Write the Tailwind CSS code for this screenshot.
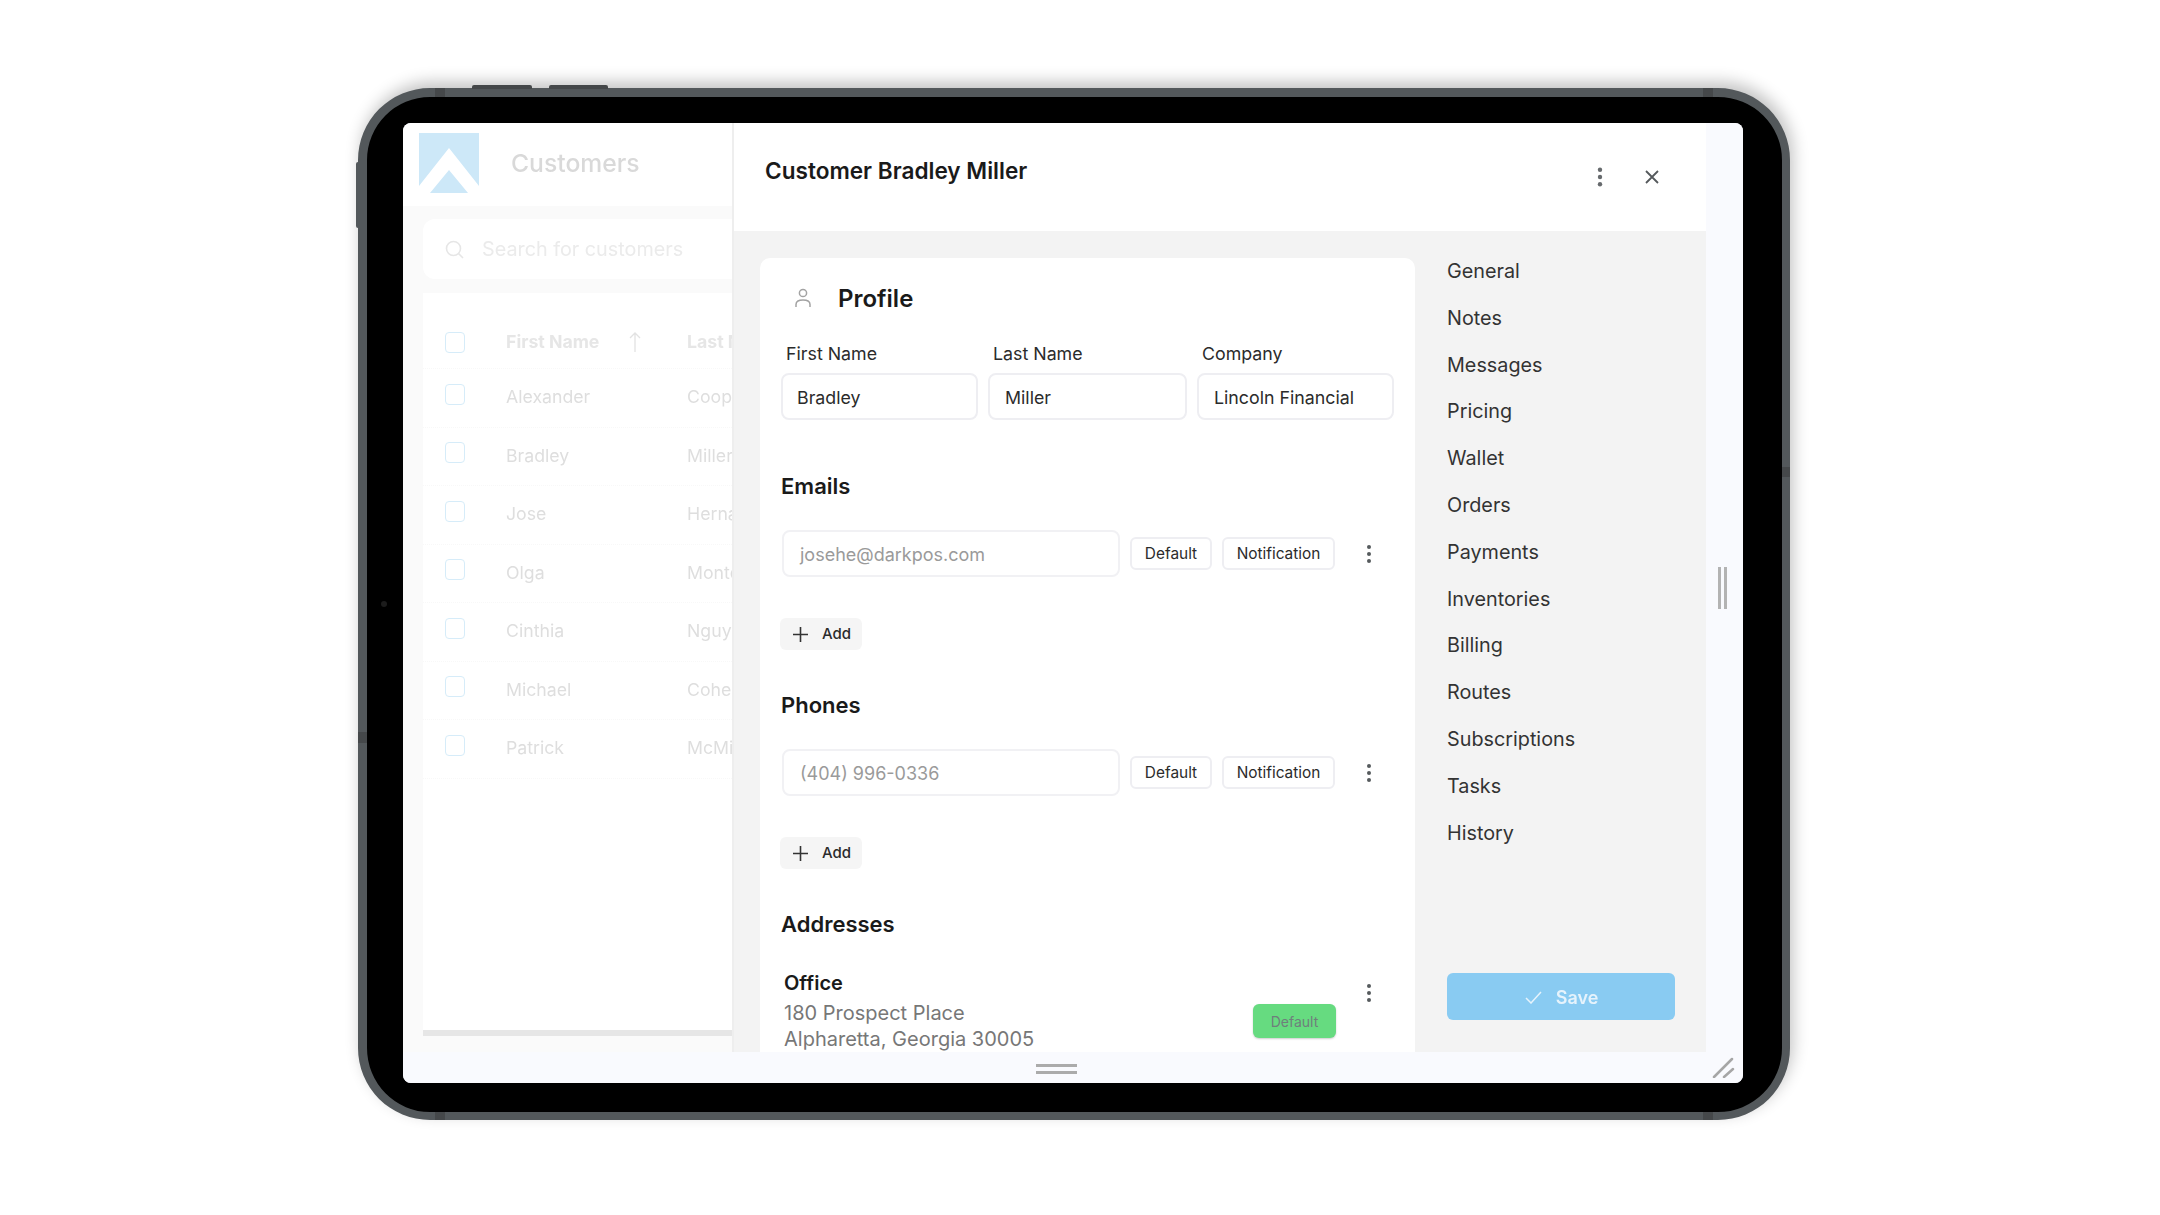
<!DOCTYPE html>
<html lang="en">
<head>
<meta charset="utf-8">
<title>Customer Bradley Miller</title>
<script src="https://cdn.jsdelivr.net/npm/@tailwindcss/browser@4"></script>
</head>
<body class="w-[2160px] h-[1215px] overflow-hidden bg-white pl-[358px] pt-[88px] font-['Inter',sans-serif]">
<div class="relative w-[1432px] h-[1032px]">
  <!-- hardware buttons -->
  <div class="absolute left-[114px] top-[-3px] w-[60px] h-[4px] rounded-t-[2px] bg-[#45484a]"></div>
  <div class="absolute left-[191px] top-[-3px] w-[59px] h-[4px] rounded-t-[2px] bg-[#45484a]"></div>
  <div class="absolute left-[-2px] top-[74px] w-[3px] h-[66px] rounded-l-[2px] bg-[#53585b]"></div>

  <div class="w-[1432px] h-[1032px] rounded-[72px] bg-black border-t-[9px] border-l-[9px] border-r-[8px] border-b-[8px] border-[#53585b] shadow-[3px_-6px_16px_rgba(0,0,0,0.24)] pt-[26px] pl-[36px] pr-[39px] pb-[29px]">
    <!-- screen -->
    <div class="relative w-[1340px] h-[960px] rounded-[8px] overflow-hidden bg-[#f9fafe] flex flex-col blur-[0.5px]">
      <div class="flex h-[929px]">
        <!-- left list panel -->
        <div class="w-[331px] shrink-0 flex flex-col border-r-[2px] border-[#eeeeee] overflow-hidden">
          <div class="h-[83px] shrink-0 bg-white pl-[16px] pt-[10px] flex items-start">
            <svg class="w-[60px] h-[60px] shrink-0" viewBox="0 0 60 60"><rect width="60" height="60" fill="#cde8f8"/><polygon points="30,15 60,53 60,60 49,60 30,37 11,60 0,60 0,53" fill="#ffffff"/></svg>
            <div class="ml-[32px] h-[62px] flex items-center text-[24.7px] font-medium text-[#d9d9d9]">Customers</div>
          </div>
          <div class="flex-1 min-h-0 bg-[#fafafa] pl-[20px] pt-[13px] pb-[16px] flex flex-col">
            <div class="h-[60px] shrink-0 bg-white rounded-l-[12px] pl-[22px] flex items-center text-[19.8px] text-[#ebebeb] whitespace-nowrap overflow-hidden">
              <svg class="w-[19px] h-[19px] shrink-0" viewBox="0 0 19 19" fill="none" stroke="#e6e6e6" stroke-width="1.6"><circle cx="8.5" cy="8.5" r="7"/><path d="M13.5 13.5 18 18"/></svg>
              <span class="ml-[18px] pt-[2px]">Search for customers</span>
            </div>
            <div class="mt-[14px] flex-1 min-h-0 bg-white border-b-[6px] border-[#e6e6e6] pt-[24px] overflow-hidden text-[17.7px] text-[#dedede] whitespace-nowrap">
              <div class="h-[52px] flex items-center pl-[22px] border-b border-dotted border-[#f8f8f8]">
                <span class="w-[20px] h-[21px] shrink-0 rounded-[4px] border border-[#d6ecf9]"></span>
                <div class="ml-[41px] w-[181px] shrink-0 flex items-center font-bold text-[#e6e6e6]">
                  <span>First Name</span>
                  <svg class="ml-[29px] w-[14px] h-[22px]" viewBox="0 0 14 22" fill="none" stroke="#e2e2e2" stroke-width="1.3"><path d="M7 21V2M2 7l5-5 5 5"/></svg>
                </div>
                <span class="font-bold text-[#e6e6e6]">Last Name</span>
              </div>
              <div class="h-[58.5px] flex items-center pl-[22px] border-b border-dotted border-[#f8f8f8]">
                <span class="mb-[7px] w-[20px] h-[21px] shrink-0 rounded-[4px] border border-[#d6ecf9]"></span><span class="ml-[41px] w-[181px] shrink-0">Alexander</span><span>Cooper</span>
              </div>
              <div class="h-[58.5px] flex items-center pl-[22px] border-b border-dotted border-[#f8f8f8]">
                <span class="mb-[7px] w-[20px] h-[21px] shrink-0 rounded-[4px] border border-[#d6ecf9]"></span><span class="ml-[41px] w-[181px] shrink-0">Bradley</span><span>Miller</span>
              </div>
              <div class="h-[58.5px] flex items-center pl-[22px] border-b border-dotted border-[#f8f8f8]">
                <span class="mb-[7px] w-[20px] h-[21px] shrink-0 rounded-[4px] border border-[#d6ecf9]"></span><span class="ml-[41px] w-[181px] shrink-0">Jose</span><span>Hernandez</span>
              </div>
              <div class="h-[58.5px] flex items-center pl-[22px] border-b border-dotted border-[#f8f8f8]">
                <span class="mb-[7px] w-[20px] h-[21px] shrink-0 rounded-[4px] border border-[#d6ecf9]"></span><span class="ml-[41px] w-[181px] shrink-0">Olga</span><span>Montero</span>
              </div>
              <div class="h-[58.5px] flex items-center pl-[22px] border-b border-dotted border-[#f8f8f8]">
                <span class="mb-[7px] w-[20px] h-[21px] shrink-0 rounded-[4px] border border-[#d6ecf9]"></span><span class="ml-[41px] w-[181px] shrink-0">Cinthia</span><span>Nguyen</span>
              </div>
              <div class="h-[58.5px] flex items-center pl-[22px] border-b border-dotted border-[#f8f8f8]">
                <span class="mb-[7px] w-[20px] h-[21px] shrink-0 rounded-[4px] border border-[#d6ecf9]"></span><span class="ml-[41px] w-[181px] shrink-0">Michael</span><span>Cohen</span>
              </div>
              <div class="h-[58.5px] flex items-center pl-[22px] border-b border-dotted border-[#f8f8f8]">
                <span class="mb-[7px] w-[20px] h-[21px] shrink-0 rounded-[4px] border border-[#d6ecf9]"></span><span class="ml-[41px] w-[181px] shrink-0">Patrick</span><span>McMillan</span>
              </div>
            </div>
          </div>
        </div>

        <!-- main drawer -->
        <div class="w-[972px] shrink-0 flex flex-col">
          <div class="h-[108px] shrink-0 bg-white flex items-start pl-[31px] pr-[46px]">
            <h1 class="mt-[32px] h-[32px] flex items-center text-[22.6px] font-semibold text-[#1a1a1a] whitespace-nowrap">Customer Bradley Miller</h1>
            <div class="ml-auto mt-[44px] flex items-center h-[20px]">
              <svg class="w-[8px] h-[20px]" viewBox="0 0 8 20" fill="#666a6d"><circle cx="4" cy="2.8" r="2.2"/><circle cx="4" cy="10" r="2.2"/><circle cx="4" cy="17.2" r="2.2"/></svg>
              <svg class="ml-[41px] w-[14px] h-[14px] mr-[1px]" viewBox="0 0 14 14" fill="none" stroke="#55595c" stroke-width="1.8"><path d="M1 1l12 12M13 1 1 13"/></svg>
            </div>
          </div>
          <div class="flex-1 min-h-0 bg-[#f3f3f3] flex">
            <!-- card -->
            <div class="ml-[26px] mt-[27px] w-[655px] shrink-0 rounded-t-[10px] bg-white px-[21px] overflow-hidden text-[#2b2b2b]">
              <div class="h-[80px] flex items-center pl-[13px]">
                <svg class="w-[18px] h-[20px] shrink-0" viewBox="0 0 18 20" fill="none" stroke="#a3a3a3" stroke-width="1.5"><circle cx="9" cy="5" r="3.6"/><path d="M2 19v-2.5C2 13.5 5 12 9 12s7 1.500 7 4.500V19"/></svg>
                <h2 class="ml-[26px] pt-[1px] text-[24px] font-semibold text-[#1a1a1a]">Profile</h2>
              </div>
              <div class="mt-[4px] grid grid-cols-[197px_199px_197px] gap-x-[10px]">
                <div>
                  <div class="h-[25px] pl-[5px] flex items-center text-[17.8px] font-normal">First Name</div>
                  <div class="mt-[6px] h-[47px] pl-[14px] pt-[3px] flex items-center text-[17.8px] rounded-[8px] border-[2px] border-[#eeeef2]">Bradley</div>
                </div>
                <div>
                  <div class="h-[25px] pl-[5px] flex items-center text-[17.8px] font-normal">Last Name</div>
                  <div class="mt-[6px] h-[47px] pl-[15px] pt-[3px] flex items-center text-[17.8px] rounded-[8px] border-[2px] border-[#eeeef2]">Miller</div>
                </div>
                <div>
                  <div class="h-[25px] pl-[5px] flex items-center text-[17.8px] font-normal">Company</div>
                  <div class="mt-[6px] h-[47px] pl-[15px] pt-[3px] flex items-center text-[17.8px] rounded-[8px] border-[2px] border-[#eeeef2] whitespace-nowrap">Lincoln Financial</div>
                </div>
              </div>

              <h3 class="mt-[50px] h-[32px] flex items-center text-[22px] font-semibold text-[#1a1a1a]">Emails</h3>
              <div class="mt-[28px] h-[47px] flex items-center">
                <div class="ml-[1px] w-[338px] h-[47px] pl-[16px] pt-[1px] flex items-center text-[18px] text-[#9a9a9a] rounded-[8px] border-[2px] border-[#f1f1f4]">josehe@darkpos.com</div>
                <div class="ml-[10px] w-[82px] h-[33px] pt-[1px] flex items-center justify-center text-[15.4px] rounded-[6px] border-[2px] border-[#eeeef2]">Default</div>
                <div class="ml-[10px] w-[113px] h-[33px] pt-[1px] flex items-center justify-center text-[15.4px] rounded-[6px] border-[2px] border-[#eeeef2]">Notification</div>
                <svg class="ml-[30px] w-[8px] h-[20px]" viewBox="0 0 8 20" fill="#555a5d"><circle cx="4" cy="3" r="2"/><circle cx="4" cy="10" r="2"/><circle cx="4" cy="17" r="2"/></svg>
              </div>
              <div class="mt-[41px] w-[82px] -ml-[1px] h-[32px] rounded-[6px] bg-[#f5f5f5] flex items-center pl-[13px] text-[15px] font-medium">
                <svg class="w-[15px] h-[15px]" viewBox="0 0 15 15" fill="none" stroke="#333333" stroke-width="1.6"><path d="M7.500 0v15M0 7.500h15"/></svg>
                <span class="ml-[14px]">Add</span>
              </div>

              <h3 class="mt-[39px] h-[32px] flex items-center text-[22px] font-semibold text-[#1a1a1a]">Phones</h3>
              <div class="mt-[28px] h-[47px] flex items-center">
                <div class="ml-[1px] w-[338px] h-[47px] pl-[16px] pt-[1px] flex items-center text-[18px] text-[#9a9a9a] rounded-[8px] border-[2px] border-[#f1f1f4]">(404) 996-0336</div>
                <div class="ml-[10px] w-[82px] h-[33px] pt-[1px] flex items-center justify-center text-[15.4px] rounded-[6px] border-[2px] border-[#eeeef2]">Default</div>
                <div class="ml-[10px] w-[113px] h-[33px] pt-[1px] flex items-center justify-center text-[15.4px] rounded-[6px] border-[2px] border-[#eeeef2]">Notification</div>
                <svg class="ml-[30px] w-[8px] h-[20px]" viewBox="0 0 8 20" fill="#555a5d"><circle cx="4" cy="3" r="2"/><circle cx="4" cy="10" r="2"/><circle cx="4" cy="17" r="2"/></svg>
              </div>
              <div class="mt-[41px] w-[82px] -ml-[1px] h-[32px] rounded-[6px] bg-[#f5f5f5] flex items-center pl-[13px] text-[15px] font-medium">
                <svg class="w-[15px] h-[15px]" viewBox="0 0 15 15" fill="none" stroke="#333333" stroke-width="1.6"><path d="M7.500 0v15M0 7.500h15"/></svg>
                <span class="ml-[14px]">Add</span>
              </div>

              <h3 class="mt-[39px] h-[32px] flex items-center text-[22px] font-semibold text-[#1a1a1a]">Addresses</h3>
              <div class="mt-[30px] flex items-start">
                <div class="pl-[3px] w-[472px] shrink-0">
                  <div class="h-[25px] flex items-center text-[20px] font-semibold text-[#1a1a1a]">Office</div>
                  <div class="mt-[5px] text-[20px] leading-[26px] text-[#777777]">180 Prospect Place<br>Alpharetta, Georgia 30005</div>
                </div>
                <div class="mt-[34px] w-[83px] h-[34px] shrink-0 rounded-[6px] bg-[#66db80] shadow-[0_1px_2px_rgba(0,0,0,0.2)] flex items-center justify-center text-[14px] text-[#6f7f7c]">Default</div>
                <svg class="ml-[29px] mt-[13px] w-[8px] h-[20px]" viewBox="0 0 8 20" fill="#555a5d"><circle cx="4" cy="3" r="2"/><circle cx="4" cy="10" r="2"/><circle cx="4" cy="17" r="2"/></svg>
              </div>
            </div>

            <!-- section nav -->
            <div class="ml-[32px] w-[228px] shrink-0 flex flex-col pt-[17.4px] pb-[32px] text-[19.8px] text-[#333333]">
              <div class="h-[46.8px] flex items-center">General</div>
              <div class="h-[46.8px] flex items-center">Notes</div>
              <div class="h-[46.8px] flex items-center">Messages</div>
              <div class="h-[46.8px] flex items-center">Pricing</div>
              <div class="h-[46.8px] flex items-center">Wallet</div>
              <div class="h-[46.8px] flex items-center">Orders</div>
              <div class="h-[46.8px] flex items-center">Payments</div>
              <div class="h-[46.8px] flex items-center">Inventories</div>
              <div class="h-[46.8px] flex items-center">Billing</div>
              <div class="h-[46.8px] flex items-center">Routes</div>
              <div class="h-[46.8px] flex items-center">Subscriptions</div>
              <div class="h-[46.8px] flex items-center">Tasks</div>
              <div class="h-[46.8px] flex items-center">History</div>
              <div class="mt-auto h-[47px] pt-[1px] pl-[1px] rounded-[6px] bg-[#89cbf2] flex items-center justify-center text-[18px] font-semibold text-[#e6f3fc]">
                <svg class="w-[17px] h-[13px]" viewBox="0 0 17 13" fill="none" stroke="#e6f3fc" stroke-width="1.500"><path d="M1 7l5 5L16 1"/></svg>
                <span class="ml-[14px]">Save</span>
              </div>
            </div>
          </div>
        </div>

        <!-- right strip -->
        <div class="flex-1 bg-[#f9fafe]"></div>
      </div>
      <div class="h-[31px] shrink-0 bg-[#f9fafe]"></div>

      <!-- drag handles -->
      <div class="absolute left-[633px] top-[941px] w-[41px] h-[10px] border-y-[3px] border-[#ababab]"></div>
      <div class="absolute left-[1315px] top-[444px] w-[9px] h-[42px] border-x-[3px] border-[#b3b3b3]"></div>
      <svg class="absolute left-[1308px] top-[933px] w-[24px] h-[22px]" viewBox="0 0 24 22" fill="none" stroke="#a6a6a6" stroke-width="2.500" stroke-linecap="round"><path d="M3 21 21 3M13 21l9-8"/></svg>
    </div>
  </div>

  <!-- frame seams and camera -->
  <div class="absolute left-[77px] top-0 w-[10px] h-[9px] bg-[#45484a]"></div>
  <div class="absolute left-[1345px] top-0 w-[10px] h-[9px] bg-[#45484a]"></div>
  <div class="absolute left-[77px] bottom-0 w-[10px] h-[8px] bg-[#45484a]"></div>
  <div class="absolute left-[1345px] bottom-0 w-[10px] h-[8px] bg-[#45484a]"></div>
  <div class="absolute left-0 top-[644px] w-[9px] h-[11px] bg-[#45484a]"></div>
  <div class="absolute right-0 top-[379px] w-[8px] h-[10px] bg-[#45484a]"></div>
  <div class="absolute left-[23px] top-[513px] w-[6px] h-[6px] rounded-full bg-[#1c1c1c]"></div>
</div>
</body>
</html>
